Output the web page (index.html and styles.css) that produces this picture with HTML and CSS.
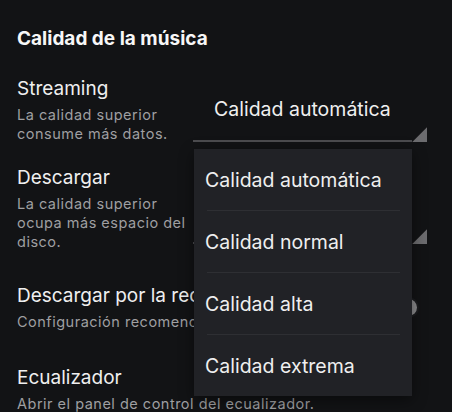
FILE: index.html
```html
<!DOCTYPE html>
<html lang="es">
<head>
<meta charset="utf-8">
<title>Calidad de la música</title>
<link rel="stylesheet" href="styles.css">
</head>
<body>
<main class="page">
  <h2 class="heading">Calidad de la música</h2>
  <div class="list">
    <div class="row row-first">
      <div class="text">
        <div class="title">Streaming</div>
        <div class="desc">La calidad superior consume más datos.</div>
      </div>
      <div class="select">
        <div class="select-field">Calidad automática</div>
        <div class="select-corner"></div>
        <ul class="menu">
          <li class="menu-item">Calidad automática</li>
          <li class="menu-sep"></li>
          <li class="menu-item">Calidad normal</li>
          <li class="menu-sep"></li>
          <li class="menu-item">Calidad alta</li>
          <li class="menu-sep"></li>
          <li class="menu-item">Calidad extrema</li>
        </ul>
      </div>
    </div>
    <div class="row row-second">
      <div class="text">
        <div class="title">Descargar</div>
        <div class="desc">La calidad superior ocupa más espacio del disco.</div>
      </div>
      <div class="select select-low">
        <div class="select-field">Calidad automática</div>
        <div class="select-corner"></div>
      </div>
    </div>
    <div class="row row-toggle">
      <div class="text">
        <div class="title nowrap">Descargar por la red móvil</div>
        <div class="desc nowrap">Configuración recomendada: desactivada</div>
      </div>
      <div class="toggle"><span class="knob"></span></div>
    </div>
    <div class="row row-plain">
      <div class="text">
        <div class="title">Ecualizador</div>
        <div class="desc nowrap">Abrir el panel de control del ecualizador.</div>
      </div>
    </div>
  </div>
</main>
</body>
</html>
```
FILE: styles.css
```css
html, body {
  margin: 0;
  padding: 0;
}
body {
  width: 452px;
  height: 412px;
  overflow: hidden;
  background: #121315;
  color: #efefef;
  font-family: Inter, "Noto Sans", "Liberation Sans", sans-serif;
}
.page {
  padding: 27px 25px 0 17px;
}
.heading {
  margin: 0;
  font-size: 19px;
  font-weight: 700;
  line-height: 24px;
  color: #f7f7f7;
}
.list {
  margin-top: 27px;
}
.row {
  display: grid;
  grid-template-columns: 1fr 234px;
  align-items: center;
}
.row-second {
  margin-top: 24.5px;
}
.row-toggle {
  grid-template-columns: 1fr auto;
  margin-top: 34.5px;
}
.row-plain {
  grid-template-columns: 1fr;
  margin-top: 36.5px;
}
.text {
  min-width: 0;
}
.title {
  font-size: 19px;
  line-height: 22px;
  color: #efefef;
}
.desc {
  margin-top: 4.5px;
  font-size: 14.5px;
  line-height: 19px;
  letter-spacing: 0.5px;
  color: #9f9fa1;
}
.nowrap {
  white-space: nowrap;
}
.select {
  position: relative;
  height: 64px;
  display: flex;
}
.select-low {
  margin-top: 7px;
}
.select-field {
  flex: 1;
  display: flex;
  align-items: center;
  padding-left: 21px;
  border-bottom: 2px solid #4c4c4f;
  font-size: 19.5px;
  color: #efefef;
}
.select-corner {
  width: 15px;
  height: 15px;
  align-self: flex-end;
  background: #6c6c6f;
  clip-path: polygon(100% 0, 100% 100%, 0 100%);
}
.menu {
  position: absolute;
  top: calc(100% + 7px);
  left: 1px;
  z-index: 10;
  width: 218px;
  margin: 0;
  padding: 0;
  list-style: none;
  background: #212226;
  box-shadow: 0 4px 14px rgba(0, 0, 0, 0.45);
}
.menu-item {
  height: 61px;
  padding: 2px 0 0 11px;
  box-sizing: border-box;
  line-height: 59px;
  font-size: 19.5px;
  color: #efefef;
}
.menu-sep {
  height: 1px;
  margin: 0 12px 0 13px;
  background: #2e2f33;
}
.toggle {
  justify-self: end;
  width: 38px;
  height: 21px;
  padding: 0 2px;
  margin-right: 8px;
  border-radius: 11px;
  background: #1b1c1f;
  display: flex;
  align-items: center;
  justify-content: flex-end;
}
.knob {
  width: 17px;
  height: 17px;
  border-radius: 50%;
  background: #8c8c8e;
}
```
